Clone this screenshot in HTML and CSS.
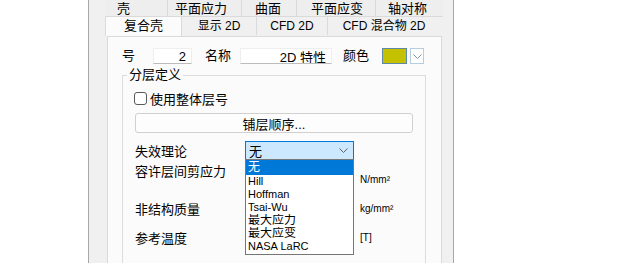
FILE: index.html
```html
<!DOCTYPE html>
<html lang="zh-CN">
<head>
    <meta charset="UTF-8">
    <title>2D 特性</title>
    <link rel="stylesheet" href="styles.css">
</head>
<body>
    <div class="dialog">
        <div class="tab-row back">
            <div class="tab">壳</div>
            <div class="tab">平面应力</div>
            <div class="tab">曲面</div>
            <div class="tab">平面应变</div>
            <div class="tab">轴对称</div>
        </div>
        <div class="tab-row front">
            <div class="tab active">复合壳</div>
            <div class="tab">显示 2D</div>
            <div class="tab">CFD 2D</div>
            <div class="tab">CFD 混合物 2D</div>
        </div>
        <div class="tab-panel">
            <div class="id-row">
                <span class="lbl lbl-no">号</span>
                <input type="text" class="text-input num-input" value="2">
                <span class="lbl lbl-name">名称</span>
                <input type="text" class="text-input name-input" value="2D 特性">
                <span class="lbl lbl-color">颜色</span>
                <div class="color-pick">
                    <span class="swatch"></span>
                    <span class="color-arrow">
                        <svg width="9" height="5" viewBox="0 0 9 5"><polyline points="0.5,0.5 4.5,4.5 8.5,0.5" fill="none" stroke="#7d8fa0" stroke-width="1"/></svg>
                    </span>
                </div>
            </div>
            <fieldset class="group">
                <legend>分层定义</legend>
                <label class="check-row"><span class="checkbox"></span>使用整体层号</label>
                <button type="button" class="wide-btn">铺层顺序...</button>
                <div class="prop-row combo-row">
                    <span class="prop-lbl">失效理论</span>
                    <div class="combo">
                        <span>无</span>
                        <svg width="9" height="5" viewBox="0 0 9 5"><polyline points="0.5,0.5 4.5,4.5 8.5,0.5" fill="none" stroke="#606060" stroke-width="1"/></svg>
                    </div>
                </div>
                <div class="prop-row shear-row">
                    <span class="prop-lbl">容许层间剪应力</span>
                    <span class="unit">N/mm²</span>
                </div>
                <div class="prop-row mass-row">
                    <span class="prop-lbl">非结构质量</span>
                    <span class="unit">kg/mm²</span>
                </div>
                <div class="prop-row temp-row">
                    <span class="prop-lbl">参考温度</span>
                    <span class="unit">[T]</span>
                </div>
            </fieldset>
        </div>
    </div>

    <!-- 失效理论下拉列表 -->
    <ul class="drop-list">
        <li class="selected cjk">无</li>
        <li>Hill</li>
        <li>Hoffman</li>
        <li>Tsai-Wu</li>
        <li class="cjk">最大应力</li>
        <li class="cjk">最大应变</li>
        <li>NASA LaRC</li>
    </ul>
</body>
</html>
```

FILE: styles.css
```css
body {
    margin: 0;
    height: 263px;
    overflow: hidden;
    background-color: #fff;
    font-family: "Liberation Sans", "Noto Sans CJK SC", sans-serif;
    font-size: 13px;
    color: #000;
    position: relative;
}
.dialog {
    box-sizing: border-box;
    margin-left: 88px;
    width: 366px;
    height: 263px;
    padding: 0 10px 0 16px;
    border-left: 1px solid #a8a8a8;
    border-right: 1px solid #a8a8a8;
    background-color: #f0f0f0;
}
.tab-row {
    display: flex;
}
.tab {
    box-sizing: border-box;
    white-space: nowrap;
}
.back .tab {
    height: 17px;
    line-height: 17px;
    border-right: 1px solid #dadada;
    border-bottom: 1px solid #dadada;
    background-color: #eeeeee;
}
.back .tab:nth-child(1) { width: 63px; padding-left: 12px; }
.back .tab:nth-child(2) { width: 74px; padding-left: 7px; }
.back .tab:nth-child(3) { width: 55px; padding-left: 13px; }
.back .tab:nth-child(4) { width: 79px; padding-left: 14px; }
.back .tab:nth-child(5) { width: 67px; padding-left: 12px; border-right: none; }
.front .tab {
    height: 18px;
    line-height: 18px;
    text-align: center;
    font-size: 12px;
    border-right: 1px solid #dadada;
    background-color: #f0f0f0;
}
.front .tab:nth-child(1) { width: 77px; }
.front .tab:nth-child(2) { width: 75px; }
.front .tab:nth-child(3) { width: 71px; }
.front .tab:nth-child(4) { width: 112px; border-right: none; }
.front .tab.active {
    font-size: 13px;
    background-color: #fbfbfb;
    border-left: 1px solid #dadada;
    position: relative;
    z-index: 1;
    height: 19px;
}
.tab-panel {
    box-sizing: border-box;
    margin: 0 1px 0 2px;
    height: 228px;
    border: 1px solid #dadada;
    border-bottom: none;
    background-color: #fbfbfb;
}
.id-row {
    display: flex;
    align-items: center;
    height: 16px;
    margin-top: 11px;
    padding-left: 14px;
}
.lbl {
    display: inline-block;
    line-height: 16px;
}
.lbl-no { width: 31px; }
.lbl-name { width: 35px; margin-left: 13px; }
.lbl-color { width: 39px; margin-left: 11px; }
.text-input {
    box-sizing: border-box;
    height: 16px;
    padding: 0 5px 0 0;
    border: 1px solid #eeeeee;
    border-bottom-color: #bcbcbc;
    background-color: #fff;
    font-family: inherit;
    font-size: 13px;
    text-align: right;
    outline: none;
}
.num-input { width: 39px; }
.name-input { width: 92px; }
.color-pick {
    display: flex;
    gap: 3px;
    width: 42px;
    height: 16px;
}
.swatch {
    box-sizing: border-box;
    width: 25px;
    height: 16px;
    border: 1px solid #5f87a6;
    background-color: #c4c100;
}
.color-arrow {
    box-sizing: border-box;
    width: 14px;
    height: 16px;
    border: 1px solid #b5cde0;
    background-color: #fff;
    display: flex;
    align-items: center;
    justify-content: center;
}
.group {
    box-sizing: border-box;
    margin: 4px 15px 0 14px;
    padding: 0 0 0 11px;
    height: 200px;
    border: 1px solid #dcdcdc;
}
.group legend {
    margin-left: -7px;
    padding: 0 2px;
    line-height: 14px;
}
.check-row {
    display: flex;
    align-items: center;
    height: 14px;
    margin-top: 9px;
}
.checkbox {
    box-sizing: border-box;
    width: 13px;
    height: 13px;
    margin-right: 3px;
    border: 1px solid #5a5a5a;
    border-radius: 3px;
    background-color: #fff;
}
.wide-btn {
    display: block;
    box-sizing: border-box;
    margin: 8px 0 0 1px;
    width: 278px;
    height: 20px;
    padding: 0;
    border: 1px solid #d0d0d0;
    border-radius: 3px;
    background-color: #fdfdfd;
    font-family: inherit;
    font-size: 13px;
    color: #000;
}
.prop-row {
    display: flex;
    margin-left: 1px;
}
.prop-lbl {
    width: 110px;
    flex-shrink: 0;
    white-space: nowrap;
}
.unit {
    margin-left: 115px;
    font-size: 10px;
}
.combo-row {
    margin-top: 8px;
    height: 19px;
    align-items: center;
}
.combo {
    box-sizing: border-box;
    width: 109px;
    height: 19px;
    padding: 0 5px 0 3px;
    border: 1px solid #0078d7;
    background-color: #cce8ff;
    display: flex;
    align-items: center;
    justify-content: space-between;
}
.shear-row {
    margin-top: 2px;
    height: 26px;
}
.shear-row .prop-lbl {
    line-height: 20px;
}
.shear-row .unit {
    align-self: flex-end;
    line-height: 16px;
}
.mass-row {
    margin-top: 10px;
    height: 20px;
    align-items: center;
}
.temp-row {
    margin-top: 9px;
    height: 20px;
    align-items: center;
}
.drop-list {
    position: absolute;
    left: 245px;
    top: 159px;
    box-sizing: border-box;
    width: 109px;
    height: 96px;
    margin: 0;
    padding: 0;
    list-style: none;
    border: 1px solid #767676;
    background-color: #fff;
    font-size: 11px;
}
.drop-list li {
    height: 13px;
    line-height: 13px;
    padding-left: 2px;
    white-space: nowrap;
    overflow: hidden;
}
.drop-list li.cjk {
    font-size: 12px;
}
.drop-list li.selected {
    height: 15px;
    line-height: 14px;
    background-color: #0078d7;
    color: #fff;
}
```
